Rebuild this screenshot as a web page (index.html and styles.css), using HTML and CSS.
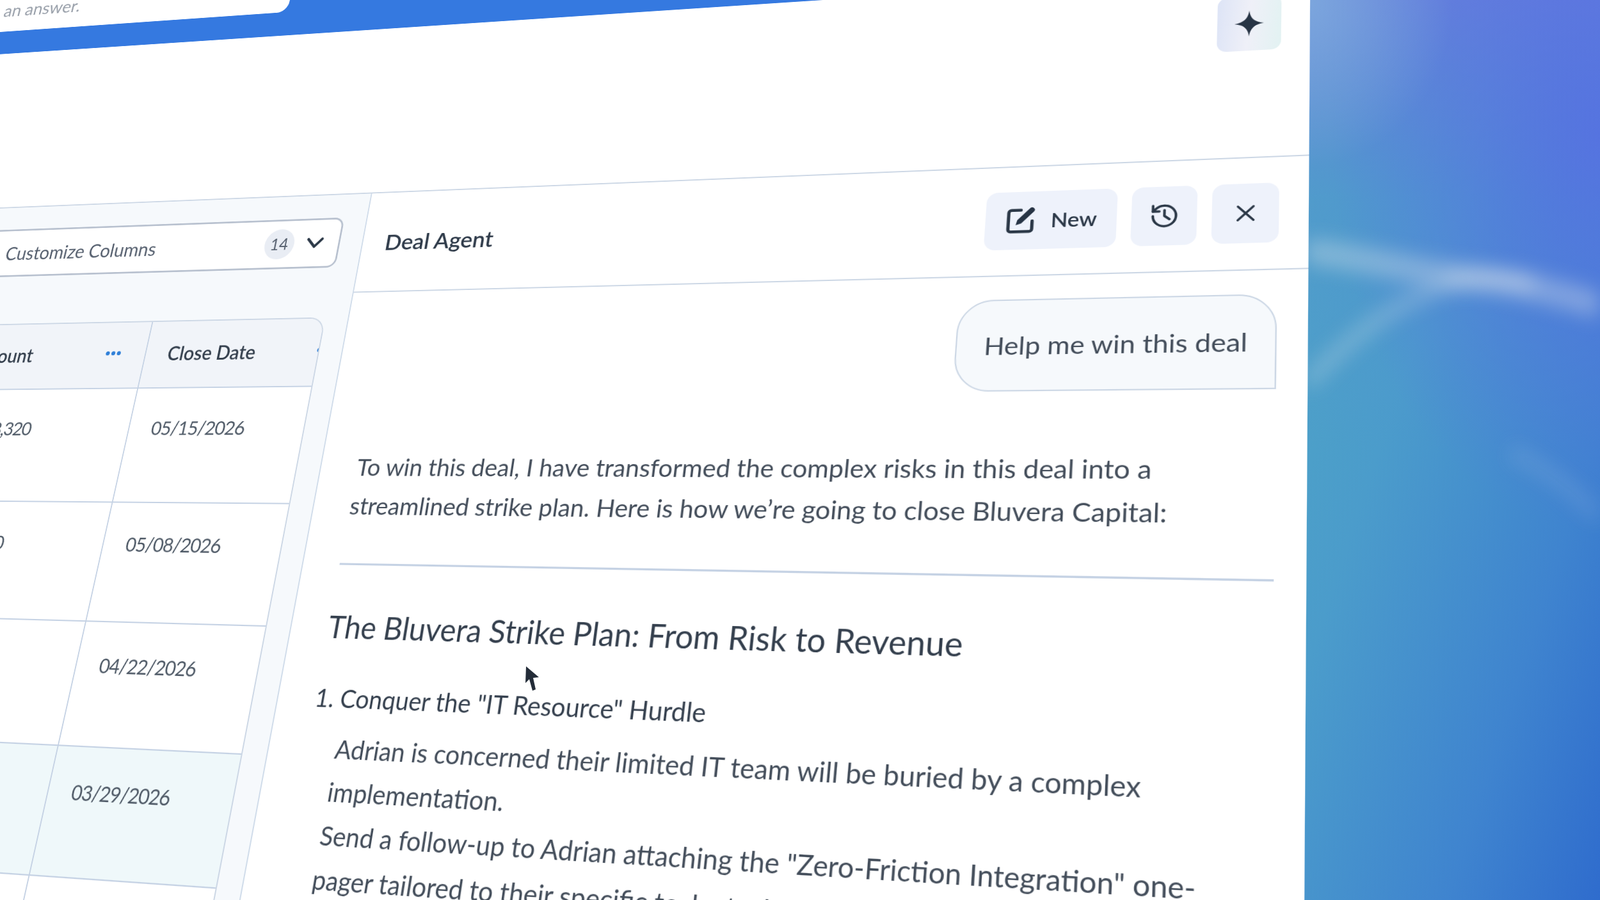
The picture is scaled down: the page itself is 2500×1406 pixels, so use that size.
FILE: index.html
```html
<!DOCTYPE html>
<html lang="en">
    <head>
        <meta charset="UTF-8">
        <title>Deal Agent</title>
        <link rel="stylesheet" href="styles.css">
    </head>
    <body>
        <div class="stage">
            <div class="backdrop">
                <svg class="waves" width="460" height="1406" viewBox="0 0 460 1406">
                    <path class="wave wave-wide" d="M0 392 C110 405 170 425 240 432 C320 440 390 455 460 478" />
                    <path class="wave wave-thin" d="M0 600 C60 540 130 470 240 440 C280 430 320 432 360 445" />
                    <path class="wave wave-crest" d="M220 430 C260 432 300 432 350 445" />
                    <path class="wave wave-faint" d="M320 705 C370 730 420 765 460 810" />
                </svg>
            </div>

            <div class="window">
                <div class="top-area">
                    <div class="banner">
                        <div class="banner-card"><span class="banner-text">an answer.</span></div>
                    </div>
                    <div class="top-tools">
                        <button class="spark-btn">
                            <svg width="44" height="44" viewBox="0 0 24 24"><path class="icon-fill" d="M12 .5C13 7.500 15.500 10.600 23 12 15.500 13.400 13 16.500 12 23.500 11 16.500 8.500 13.400 1 12 8.500 10.600 11 7.500 12 .5z"/></svg>
                        </button>
                    </div>
                </div>

                <div class="workspace">
                    <div class="deals">
                        <div class="columns-select">
                            <span class="columns-label">Customize Columns</span>
                            <span class="columns-count">14</span>
                            <svg width="32" height="20" viewBox="0 0 32 20"><path class="icon-line icon-chevron" d="M4 3l12 13L28 3"/></svg>
                        </div>
                        <div class="deals-table">
                            <div class="row row-head">
                                <div class="cell"></div>
                                <div class="cell">Amount<span class="dots"><i></i><i></i><i></i></span></div>
                                <div class="cell">Close Date<span class="dots"><i></i><i></i><i></i></span></div>
                            </div>
                            <div class="row">
                                <div class="cell"></div>
                                <div class="cell cell-amount">$1,148,320</div>
                                <div class="cell">05/15/2026</div>
                            </div>
                            <div class="row">
                                <div class="cell"></div>
                                <div class="cell cell-amount">$1,126,450</div>
                                <div class="cell">05/08/2026</div>
                            </div>
                            <div class="row">
                                <div class="cell"></div>
                                <div class="cell cell-amount">$94,700</div>
                                <div class="cell">04/22/2026</div>
                            </div>
                            <div class="row row-active">
                                <div class="cell"></div>
                                <div class="cell cell-amount">$210,000</div>
                                <div class="cell">03/29/2026</div>
                            </div>
                            <div class="row">
                                <div class="cell"></div>
                                <div class="cell cell-amount">$58,900</div>
                                <div class="cell">03/18/2026</div>
                            </div>
                        </div>
                    </div>

                    <div class="agent">
                        <div class="agent-head">
                            <span class="agent-title">Deal Agent</span>
                            <div class="agent-actions">
                                <button class="action-btn action-new">
                                    <svg width="46" height="46" viewBox="0 0 24 24"><path class="icon-line" d="M12 3.500H5a2 2 0 0 0-2 2V19a2 2 0 0 0 2 2h13.500a2 2 0 0 0 2-2v-6.500"/><path class="icon-fill" d="M18.500 2.200a1.900 1.900 0 0 1 3 2.800l-9 9.400-4 1.200 1-4z"/></svg>
                                    New
                                </button>
                                <button class="action-btn">
                                    <svg width="42" height="42" viewBox="0 0 24 24"><path class="icon-line icon-thin" d="M3 12a9 9 0 1 0 9-9 9.750 9.750 0 0 0-6.740 2.740L3 8"/><path class="icon-line icon-thin" d="M3 3v5h5"/><path class="icon-line icon-thin" d="M12 7v5l4 3"/></svg>
                                </button>
                                <button class="action-btn">
                                    <svg width="26" height="26" viewBox="0 0 30 30"><path class="icon-line icon-x" d="M3 3l24 24M27 3L3 27"/></svg>
                                </button>
                            </div>
                        </div>

                        <div class="chat">
                            <div class="bubble">Help me win this deal</div>
                            <p class="intro">To win this deal, I have transformed the complex risks in this deal into a<br>streamlined strike plan. Here is how we’re going to close Bluvera Capital:</p>
                            <hr class="rule">
                            <h2 class="plan-title">The Bluvera Strike Plan: From Risk to Revenue</h2>
                            <h3 class="step-title">1. Conquer the "IT Resource" Hurdle</h3>
                            <p class="step-text">Adrian is concerned their limited IT team will be buried by a complex<br>implementation.</p>
                            <p class="step-text">Send a follow-up to Adrian attaching the "Zero-Friction Integration" one-<br>pager tailored to their specific tech stack. Deliver it this week.</p>
                        </div>
                    </div>
                </div>
            </div>

            <svg class="pointer" width="30" height="46" viewBox="0 0 30 46"><path d="M4 3L3 29l6-6 5 18 5-2-4-18 9-1z"/></svg>
        </div>
    </body>
</html>
```

FILE: styles.css
```css
* {
    margin: 0;
    padding: 0;
    box-sizing: border-box;
    font-family: 'Lato', 'Liberation Sans', sans-serif;
}

body {
    background: #ffffff;
    overflow: hidden;
}

.stage {
    position: relative;
    width: 2500px;
    height: 1406px;
    overflow: hidden;
    background: #ffffff;
}

/* wallpaper behind the tilted window */
.backdrop {
    position: absolute;
    top: 0;
    right: 0;
    width: 500px;
    height: 1406px;
    padding-left: 40px;
    background:
        radial-gradient(ellipse 230px 260px at 8% 0%, rgba(130, 175, 222, 0.8), rgba(130, 175, 222, 0)),
        radial-gradient(ellipse 420px 620px at 100% 15%, rgba(86, 112, 226, 0.85), rgba(86, 112, 226, 0)),
        linear-gradient(to bottom, rgba(112, 118, 226, 0.7) 0, rgba(90, 130, 220, 0.25) 22%, rgba(80, 140, 210, 0) 50%),
        linear-gradient(108deg, #4ea5c5 8%, #4b9ccb 40%, #3f84cf 75%, #2f6ccd 100%);
}

.waves {
    display: block;
    filter: blur(15px);
}

.wave {
    fill: none;
    stroke: #dfe6ec;
}

.wave-wide {
    stroke-width: 40px;
    opacity: 0.36;
}

.wave-thin {
    stroke-width: 26px;
    opacity: 0.26;
}

.wave-crest {
    stroke-width: 16px;
    opacity: 0.3;
}

.wave-faint {
    stroke-width: 26px;
    opacity: 0.12;
}

/* the window is laid out flat, then tilted as a whole */
.window {
    position: absolute;
    left: 0;
    top: 0;
    width: 2276px;
    height: 1640px;
    display: flex;
    flex-direction: column;
    background: #ffffff;
    color: #3a4553;
    transform-origin: 0 0;
    transform: matrix3d(0.84975, -0.06361, 0, -0.0000902, -0.23079, 0.86152, 0, -0.00011007, 0, 0, 1, 0, 581, 300.6, 0, 1) translate(-860px, -440px);
    filter: blur(0.7px);
}

.top-area {
    height: 440px;
    flex-shrink: 0;
}

.banner {
    height: 143px;
    background: #3579e0;
}

.banner-card {
    width: 642px;
    height: 98px;
    padding: 37px 0 0 81px;
    background: #ffffff;
    border-bottom-right-radius: 20px;
}

.banner-text {
    font-size: 33px;
    line-height: 36px;
    color: #9aa1ab;
}

.top-tools {
    display: flex;
    justify-content: flex-end;
    padding: 41px 39px 0 0;
}

.spark-btn {
    display: flex;
    align-items: center;
    justify-content: center;
    width: 88px;
    height: 88px;
    border: none;
    border-radius: 14px;
    background: linear-gradient(95deg, #dde4f6 0%, #eff0f8 50%, #e2f2f2 100%);
}

.icon-fill {
    fill: #273445;
}

.icon-line {
    fill: none;
    stroke: #2b3847;
    stroke-width: 2.4px;
    stroke-linecap: round;
    stroke-linejoin: round;
}

.icon-thin {
    stroke-width: 2px;
}

.icon-x {
    stroke-width: 3.600px;
}

.icon-chevron {
    stroke-width: 4.500px;
}

.workspace {
    flex: 1;
    display: flex;
    border-top: 2px solid #ccd7e5;
    min-height: 0;
}

/* deals side */
.deals {
    width: 861px;
    flex-shrink: 0;
    padding: 40px 38px 0 0;
    background: #f6f9fc;
    border-right: 2px solid #d0dcea;
}

.columns-select {
    display: flex;
    align-items: center;
    height: 86px;
    padding: 0 25px 0 211px;
    background: #ffffff;
    border: 3px solid #b8c1cf;
    border-left: none;
    border-radius: 0 16px 16px 0;
}

.columns-label {
    flex: 1;
    font-size: 32.500px;
    color: #555f6e;
}

.columns-count {
    width: 52px;
    height: 52px;
    margin-right: 20px;
    border-radius: 50%;
    background: #e9edf4;
    font-size: 27px;
    line-height: 52px;
    text-align: center;
    color: #555f6e;
}

.deals-table {
    margin-top: 84px;
    overflow: hidden;
    border: 2px solid #ccd7e5;
    border-left: none;
    border-radius: 0 26px 0 0;
    background: #ffffff;
}

.row {
    display: grid;
    grid-template-columns: 156px 360px 372px;
    height: 187px;
    border-top: 2px solid #c5d2e4;
    font-size: 31px;
    letter-spacing: -1px;
    line-height: 40px;
    color: #4e5966;
}

.cell {
    position: relative;
    padding: 45px 0 0 39px;
    border-left: 2px solid #c5d2e4;
}

.cell:first-child {
    border-left: none;
}

.cell-amount {
    letter-spacing: -1.500px;
}

.row-head {
    height: 111px;
    border-top: none;
    background: #f1f4f9;
    font-size: 32px;
    font-weight: 600;
    letter-spacing: 0;
    color: #343f4d;
}

.row-head .cell {
    padding-top: 34px;
}

.row-active {
    background: #eff8fa;
}

.dots {
    position: absolute;
    top: 49px;
    right: 44px;
    display: flex;
    gap: 3px;
}

.dots i {
    width: 7px;
    height: 7px;
    border-radius: 50%;
    background: #2f7fd8;
}

/* agent side */
.agent {
    flex: 1;
    min-width: 0;
    display: flex;
    flex-direction: column;
}

.agent-head {
    display: flex;
    align-items: center;
    justify-content: space-between;
    height: 170px;
    flex-shrink: 0;
    padding: 0 39px 0 38px;
    border-bottom: 2px solid #ccd7e5;
}

.agent-title {
    font-size: 37px;
    font-weight: 600;
    color: #2f3b4a;
}

.agent-actions {
    display: flex;
    gap: 20px;
}

.action-btn {
    display: flex;
    align-items: center;
    justify-content: center;
    gap: 19px;
    width: 89px;
    height: 90px;
    border: none;
    border-radius: 16px;
    background: #eef2fb;
    font-size: 31px;
    font-weight: 600;
    color: #2b3847;
}

.action-new {
    width: 184px;
}

.chat {
    display: flex;
    flex-direction: column;
    padding: 35px 40px 0 59px;
}

.bubble {
    align-self: flex-end;
    width: 431px;
    height: 137px;
    padding-left: 38px;
    background: #f6f9fc;
    border: 2px solid #ccd7e5;
    border-radius: 50px 50px 0 50px;
    font-size: 37.500px;
    line-height: 133px;
    color: #434d5a;
}

.intro {
    margin-top: 81px;
    font-size: 37.300px;
    line-height: 60px;
    color: #434d5a;
}

.rule {
    margin-top: 58px;
    border: none;
    border-top: 3px solid #c5d2e4;
}

.plan-title {
    margin-top: 62px;
    font-size: 45.800px;
    font-weight: 400;
    line-height: 60px;
    color: #343f4d;
}

.step-title {
    margin-top: 43px;
    font-size: 36.700px;
    font-weight: 400;
    line-height: 60px;
    color: #343f4d;
}

.step-text {
    padding-left: 45px;
    font-size: 37.300px;
    line-height: 60px;
    color: #434d5a;
    white-space: nowrap;
}

.step-title + .step-text {
    margin-top: 12px;
}

.pointer {
    position: absolute;
    left: 818px;
    top: 1038px;
}

.pointer path {
    fill: #232c38;
}
```
